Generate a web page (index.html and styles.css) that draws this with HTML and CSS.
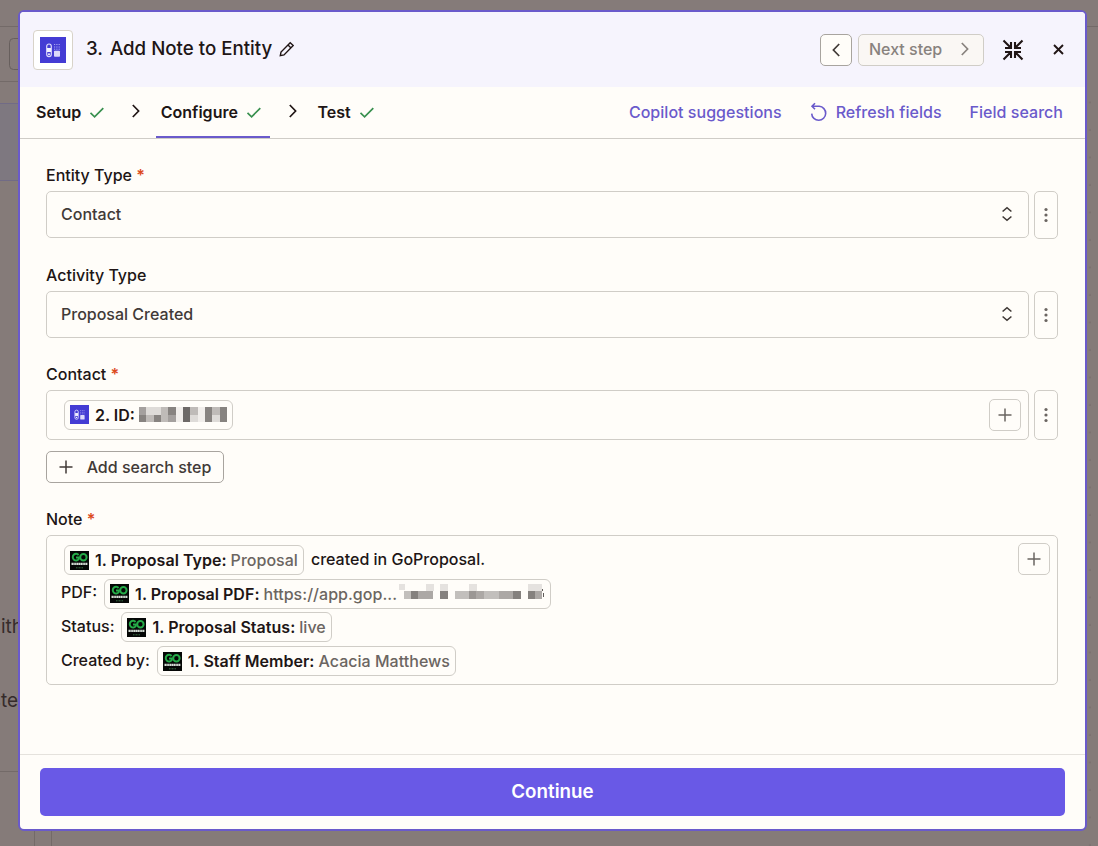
FILE: index.html
```
<!DOCTYPE html>
<html lang="en">
<head>
<meta charset="UTF-8">
<title>Add Note to Entity</title>
<link rel="stylesheet" href="styles.css">
</head>
<body>
<svg class="symbols" width="0" height="0">
<symbol id="check" viewBox="0 0 16 14"><path d="M1.5 7.8 5.6 11.8 14.3 3.2" fill="none" stroke="currentColor" stroke-width="1.7"/></symbol>
<symbol id="right" viewBox="0 0 10 16"><path d="M1.8 2 7.6 8 1.8 14" fill="none" stroke="currentColor" stroke-width="1.7"/></symbol>
<symbol id="plus" viewBox="0 0 14 14"><path d="M7 .5v13M.5 7h13" fill="none" stroke="currentColor" stroke-width="1.5"/></symbol>
<symbol id="updown" viewBox="0 0 12 16"><path d="M1.6 5.5 6 1.7l4.4 3.8M1.6 10.5 6 14.3l4.4-3.8" fill="none" stroke="currentColor" stroke-width="1.6"/></symbol>
<symbol id="dots" viewBox="0 0 4 16"><circle cx="2" cy="2.5" r="1.6"/><circle cx="2" cy="8" r="1.6"/><circle cx="2" cy="13.5" r="1.6"/></symbol>
<symbol id="app" viewBox="0 0 26 26">
<rect width="26" height="26" fill="#443cd4"/>
<rect x="6.7" y="7" width="4.6" height="12.6" rx="2.3" fill="none" stroke="#dcdafa" stroke-width="1.2"/>
<rect x="7" y="11" width="4" height="4" fill="#f2f1ff"/>
<circle cx="9" cy="17.2" r="1" fill="#f2f1ff"/>
<path d="M14 7.5h6M14 10h6M14 12.2h6" stroke="#a9a4f0" stroke-width="1" stroke-dasharray="1.2 1.1"/>
<rect x="14" y="13.8" width="6" height="6" rx=".8" fill="#dcdafa"/>
</symbol>
<symbol id="go" viewBox="0 0 19 19">
<rect width="19" height="19" fill="#050706"/>
<path d="M8.6 4A3.3 3.3 0 1 0 8.800 8V6.400H6" fill="none" stroke="#25ab48" stroke-width="2"/>
<circle cx="13.400" cy="6.200" r="3.200" fill="none" stroke="#25ab48" stroke-width="2"/>
<path d="M1.500 12.900h16" stroke="#d4ddd5" stroke-width="2.400" stroke-dasharray="1.500 .3"/>
<path d="M6 16.800h7" stroke="#3f7a4c" stroke-width=".9" stroke-dasharray="1 .5"/>
</symbol>
</svg>

<div class="behind">
<svg width="1098" height="846">
<defs><pattern id="grid" width="27.5" height="27.5" patternUnits="userSpaceOnUse" x="1075" y="10"><circle cx="15" cy="10" r=".9" fill="#766c6b"/></pattern></defs>
<rect x="0" y="104" width="20" height="76" fill="#7e7880"/>
<path d="M0 26.5h1098M0 81.5h20M0 771.5h20M34.500 830v16M51.500 830v16" stroke="#736a68" fill="none"/>
<path d="M0 103.500h20M0 180.500h20" stroke="#716b86"/>
<rect x="9.500" y="38.500" width="40" height="31" rx="4" fill="none" stroke="#675f5d"/>
<rect x="1087" y="82" width="11" height="764" fill="url(#grid)"/>
</svg>
<span class="behind-text first">ith</span>
<span class="behind-text second">ste</span>
</div>

<section class="modal">
<header class="modal-header">
<span class="app-icon"><svg width="26" height="26"><use href="#app"/></svg></span>
<h1><span class="num">3.</span> Add Note to Entity</h1>
<svg class="pencil" width="16" height="16" viewBox="0 0 16 16"><path d="M1.300 14.700 2 11 11.200 1.700 14.200 4.600 5 13.900ZM9 4l3 3" fill="none" stroke="currentColor" stroke-width="1.400"/></svg>
<div class="header-actions">
<button class="prev"><svg class="flip" width="10" height="16"><use href="#right"/></svg></button>
<button class="next">Next step <svg width="10" height="16"><use href="#right"/></svg></button>
<svg class="collapse" width="22" height="22" viewBox="0 0 22 22"><path d="M1.500 1.500l7 7M9 3v6H3M20.500 1.500l-7 7M13 3v6h6M1.500 20.500l7-7M9 19v-6H3M20.500 20.500l-7-7M13 19v-6h6" fill="none" stroke="currentColor" stroke-width="2.100"/></svg>
<svg class="close" width="11" height="11" viewBox="0 0 11 11"><path d="M1 1l9 9M10 1l-9 9" stroke="currentColor" stroke-width="1.900"/></svg>
</div>
</header>

<nav class="tabs">
<a class="tab">Setup <svg width="16" height="14"><use href="#check"/></svg></a>
<svg class="sep" width="10" height="16"><use href="#right"/></svg>
<a class="tab active">Configure <svg width="16" height="14"><use href="#check"/></svg></a>
<svg class="sep" width="10" height="16"><use href="#right"/></svg>
<a class="tab">Test <svg width="16" height="14"><use href="#check"/></svg></a>
<div class="links">
<a>Copilot suggestions</a>
<a class="refresh"><svg width="18" height="20" viewBox="0 0 18 20"><path d="M2 4.300h7.200a7 7 0 1 1-7.500 7.300M5 1.200 2 4.300l3 3" fill="none" stroke="currentColor" stroke-width="1.600"/></svg>Refresh fields</a>
<a>Field search</a>
</div>
</nav>

<div class="fields">
<div class="field">
<label>Entity Type <b>*</b></label>
<div class="row">
<div class="select">Contact <svg width="12" height="16"><use href="#updown"/></svg></div>
<button class="more"><svg width="4" height="16"><use href="#dots"/></svg></button>
</div>
</div>
<div class="field">
<label>Activity Type</label>
<div class="row">
<div class="select">Proposal Created <svg width="12" height="16"><use href="#updown"/></svg></div>
<button class="more"><svg width="4" height="16"><use href="#dots"/></svg></button>
</div>
</div>
<div class="field contact">
<label>Contact <b>*</b></label>
<div class="row">
<div class="input">
<span class="pill"><svg width="19" height="19"><use href="#app"/></svg><strong>2. ID:</strong>
<svg class="masked" width="88" height="15" viewBox="0 0 12 2" preserveAspectRatio="none" shape-rendering="crispEdges">
<path fill="#a4a09e" d="M0 0h1v1H0zM4 1h1v1H4z"/>
<path fill="#dedbd8" d="M1 0h1v1H1zM2 0h1v1H2zM7 1h1v1H7zM10 1h1v1h-1z"/>
<path fill="#f1eeeb" d="M5 0h1v2H5zM8 0h1v2H8z"/>
<path fill="#bfbbb8" d="M3 0h1v2H3zM1 1h1v1H1zM7 0h1v1H7zM10 0h1v1h-1z"/>
<path fill="#878380" d="M0 1h1v1H0zM2 1h1v1H2zM4 0h1v1H4zM9 0h1v2H9zM11 0h1v2h-1z"/>
<path fill="#6d6967" d="M6 0h1v2H6z"/>
</svg></span>
<button class="add"><svg width="14" height="14"><use href="#plus"/></svg></button>
</div>
<button class="more"><svg width="4" height="16"><use href="#dots"/></svg></button>
</div>
<button class="search-step"><svg width="14" height="14"><use href="#plus"/></svg>Add search step</button>
</div>
<div class="field">
<label>Note <b>*</b></label>
<div class="note">
<p class="indent"><span class="pill"><svg width="19" height="19"><use href="#go"/></svg><strong>1. Proposal Type:</strong> <em>Proposal</em></span> <span>created in GoProposal.</span></p>
<p><span>PDF:</span> <span class="pill"><svg width="19" height="19"><use href="#go"/></svg><strong>1. Proposal PDF:</strong> <em>https://app.gop...</em>
<svg class="masked url" width="147" height="15" viewBox="0 0 147 15" shape-rendering="crispEdges">
<path fill="#e5e2df" d="M1 0h6v6H1zM28 0h8v7h-8zM42 0h8v7h-8zM71 0h8v7h-8zM130 0h14v7h-14z"/>
<path fill="#c2bfbc" d="M6 7h7v8H6zM57 7h14v8H57zM86 7h15v8H86z"/>
<path fill="#aca8a5" d="M20 7h15v8H20zM78 7h8v8h-8zM101 7h14v8h-14zM137 7h7v8h-7z"/>
<path fill="#85817e" d="M13 7h7v8h-7zM42 7h8v8h-8zM115 7h8v8h-8zM130 7h7v8h-7z"/>
<path fill="#9b9794" d="M71 7h7v8h-7z"/>
<path fill="#5f5b58" d="M144 5h1v2h-1zM145 9h1v4h-1z"/>
</svg></span></p>
<p><span>Status:</span> <span class="pill"><svg width="19" height="19"><use href="#go"/></svg><strong>1. Proposal Status:</strong> <em>live</em></span></p>
<p><span>Created by:</span> <span class="pill"><svg width="19" height="19"><use href="#go"/></svg><strong>1. Staff Member:</strong> <em>Acacia Matthews</em></span></p>
<button class="add"><svg width="14" height="14"><use href="#plus"/></svg></button>
</div>
</div>
</div>

<footer class="modal-footer">
<button class="continue">Continue</button>
</footer>
</section>
</body>
</html>
```
FILE: styles.css
```
* {
    box-sizing: border-box;
}
body {
    margin: 0;
    height: 846px;
    padding: 10px 11px 15px 18px;
    overflow: hidden;
    background: #857b79;
    font-family: Inter, "Liberation Sans", sans-serif;
    font-size: 16px;
    font-weight: 500;
    line-height: 20px;
    color: #201515;
}
svg {
    display: block;
    flex: none;
}
button {
    display: flex;
    align-items: center;
    justify-content: center;
    padding: 0;
    border: 1px solid #d0cdc7;
    border-radius: 5px;
    background: #fffdf9;
    font: inherit;
    color: #413a37;
}
.symbols {
    position: absolute;
}

/* dimmed editor behind the dialog */
.behind {
    position: absolute;
    inset: 0;
}
.behind-text {
    position: absolute;
    font-size: 19px;
    font-weight: 400;
    color: #352b2b;
}
.first {
    top: 617px;
    left: 1px;
}
.second {
    top: 691px;
    right: 1080px;
}

.modal {
    position: relative;
    display: flex;
    flex-direction: column;
    height: 821px;
    border: 2px solid #6a5acb;
    border-radius: 6px;
    background: #fffdf9;
    overflow: hidden;
}
.modal-header {
    display: flex;
    align-items: center;
    height: 75px;
    padding: 0 21px 0 13px;
    background: #f6f4fd;
}
.app-icon {
    display: flex;
    align-items: center;
    justify-content: center;
    width: 40px;
    height: 40px;
    border: 1px solid #d8d3c9;
    border-radius: 4px;
    background: #fff;
}
h1 {
    margin: 0 0 1px 13px;
    font-size: 18.7px;
    font-weight: 500;
}
.num {
    margin-right: 2px;
}
.pencil {
    margin: 0 0 2px 7px;
}
.header-actions {
    display: flex;
    align-items: center;
    margin-left: auto;
}
.prev {
    width: 32px;
    height: 32px;
    border-color: #a8a49f;
}
.flip {
    transform: scaleX(-1);
}
.next {
    justify-content: space-between;
    width: 126px;
    height: 32px;
    margin-left: 6px;
    padding: 0 13px 1px 10px;
    background: #faf7f4;
    color: #88827e;
}
.collapse {
    margin-left: 18px;
}
.close {
    margin-left: 29px;
}

.tabs {
    display: flex;
    align-items: center;
    height: 52px;
    padding: 0 22px 0 16px;
    border-bottom: 1px solid #cfccc7;
}
.tab {
    display: flex;
    align-items: center;
    gap: 8px;
    height: 51px;
    border-bottom: 2px solid transparent;
    font-weight: 600;
}
.tab svg {
    color: #3a9150;
}
.active {
    margin: 0 -8px 0 -5px;
    padding: 0 8px 0 5px;
    border-color: #6a5acb;
}
.sep {
    margin: 0 19.5px 3px 26px;
}
.links {
    display: flex;
    gap: 28px;
    margin: 0 0 2px auto;
    letter-spacing: 0.03px;
    color: #6a5acb;
}
.refresh {
    display: flex;
    gap: 8px;
}

.fields {
    flex: 1;
    padding: 26px 27px 0 26px;
}
.field {
    margin-bottom: 25.5px;
}
.contact {
    margin-bottom: 26px;
}
label {
    display: block;
    height: 26px;
}
label b {
    color: #dc4a1d;
    font-weight: 600;
}
.row {
    display: flex;
    gap: 5px;
}
.select,
.input,
.note {
    border: 1px solid #d0cdc7;
    border-radius: 5px;
}
.select,
.input {
    display: flex;
    flex: 1;
    align-items: center;
    justify-content: space-between;
    height: 47px;
    padding: 0 15px 1px 14px;
    color: #413a37;
}
.input {
    height: 50px;
    padding: 0 7px 1px 17px;
}
.more {
    width: 24px;
    height: 48px;
    fill: #6b6561;
}
.input + .more {
    height: 50px;
}
.add {
    width: 32px;
    height: 32px;
    color: #6b6561;
}
.search-step {
    gap: 14px;
    width: 178px;
    height: 32px;
    margin-top: 11px;
    padding-bottom: 1px;
    border-color: #a8a49f;
}
.pill {
    display: flex;
    align-items: center;
    height: 30px;
    padding: 0 5px;
    border: 1px solid #d0cdc7;
    border-radius: 6px;
    color: #201515;
}
.pill strong {
    margin: 0 4px 0 6px;
    font-weight: 600;
}
.pill em {
    font-style: normal;
    color: #6b6561;
}
.note {
    position: relative;
    height: 150px;
    padding: 9px 14px;
}
.note p {
    display: flex;
    gap: 7px;
    height: 33.7px;
    margin: 0;
}
.note .pill {
    letter-spacing: 0.03px;
}
.note p > span:not(.pill) {
    padding-top: 3.5px;
}
.note .indent {
    padding-left: 3px;
}
.url {
    margin: 0 0 4px 0.5px;
}
.note .add {
    position: absolute;
    top: 7px;
    right: 7px;
}

.modal-footer {
    height: 75px;
    padding: 13px 20px 0;
    border-top: 1px solid #e5e2dd;
}
.continue {
    width: 100%;
    height: 48px;
    border: 0;
    background: #6959e6;
    color: #fff;
    font-size: 18.8px;
    font-weight: 600;
}
```
